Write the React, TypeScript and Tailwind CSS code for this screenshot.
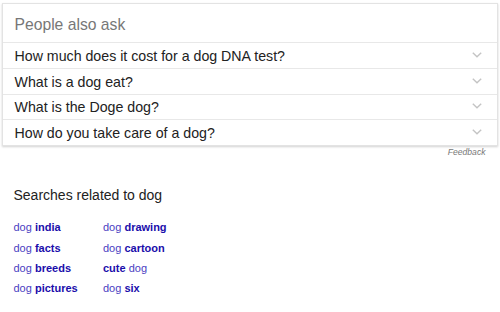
import React from "react";

const questions = [
  { q: "How much does it cost for a dog DNA test?", h: "h-[26px]" },
  { q: "What is a dog eat?", h: "h-[26px]" },
  { q: "What is the Doge dog?", h: "h-[25px]" },
  { q: "How do you take care of a dog?", h: "h-[26px]" },
];

const related: { pre?: string; bold: string; post?: string }[][] = [
  [
    { pre: "dog ", bold: "india" },
    { pre: "dog ", bold: "facts" },
    { pre: "dog ", bold: "breeds" },
    { pre: "dog ", bold: "pictures" },
  ],
  [
    { pre: "dog ", bold: "drawing" },
    { pre: "dog ", bold: "cartoon" },
    { bold: "cute", post: " dog" },
    { pre: "dog ", bold: "six" },
  ],
];

function Chevron() {
  return (
    <svg width="10" height="6" viewBox="0 0 10 6" className="block mb-[2px]">
      <path d="M0.8 0.8 L5 4.8 L9.2 0.8" fill="none" stroke="#c4c4c4" strokeWidth="1.4" />
    </svg>
  );
}

export default function App() {
  return (
    <div
      className="w-[500px] h-[312px] bg-white overflow-hidden"
      style={{ fontFamily: '"Liberation Sans", Arial, sans-serif' }}
    >
      <div className="pt-[3px] px-[2px]">
        <div className="border border-[#e3e3e3] shadow-[0_1px_2px_rgba(0,0,0,0.18)] bg-white">
          <div className="h-[38px] pt-[12.3px] pl-[11.5px]">
            <div className="text-[15.7px] leading-[18px] text-[#777777]">People also ask</div>
          </div>
          {questions.map((item) => (
            <div
              key={item.q}
              className={`${item.h} border-t border-[#e8e8e8] flex items-center justify-between pl-[11.5px] pr-[15.5px]`}
            >
              <span className="text-[14.2px] leading-[18px] text-[#222222]">{item.q}</span>
              <Chevron />
            </div>
          ))}
        </div>
      </div>
      <div className="mt-[1px] pr-[14.5px] flex justify-end">
        <span className="text-[8.6px] leading-[10px] italic text-[#777777]">Feedback</span>
      </div>
      <div className="mt-[30px] pl-[13.5px]">
        <div className="text-[14px] leading-[16px] text-[#222222]">Searches related to dog</div>
        <div className="mt-[14.4px] flex">
          {related.map((col, ci) => (
            <div key={ci} className={ci === 0 ? "w-[89.5px]" : ""}>
              {col.map((l, li) => (
                <div key={li} className="text-[11px] leading-[20.2px] text-[#4a40c2] whitespace-nowrap">
                  {l.pre}
                  <b className="font-bold text-[#1a0dab]">{l.bold}</b>
                  {l.post}
                </div>
              ))}
            </div>
          ))}
        </div>
      </div>
    </div>
  );
}
